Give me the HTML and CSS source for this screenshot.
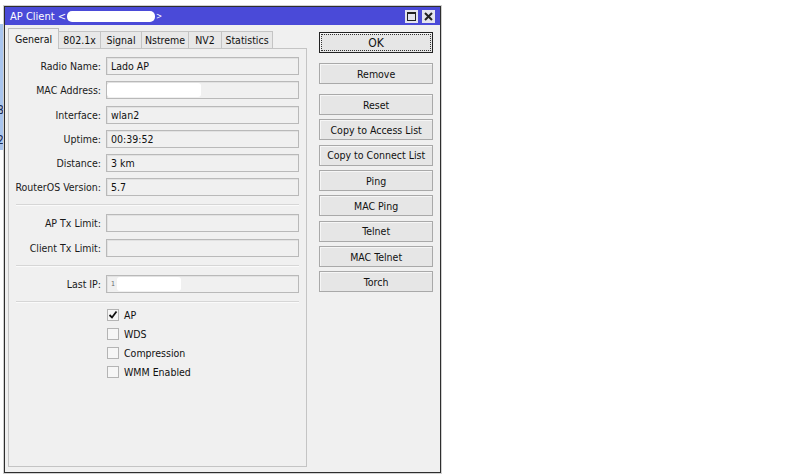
FILE: index.html
```html
<!DOCTYPE html>
<html>
<head>
<meta charset="utf-8">
<title>AP Client</title>
<link rel="stylesheet" href="styles.css">
</head>
<body>
<div class="desktop">
  <div class="behind">
    <span class="behind-char c8">8</span>
    <span class="behind-char c2">2</span>
  </div>
  <div class="window">
    <div class="titlebar">
      <span class="title">AP Client &lt;</span>
      <span class="title-redact"></span>
      <span class="title title-end">&gt;</span>
      <div class="tb-buttons">
        <span class="tb-btn">
          <svg width="13" height="13" viewBox="0 0 13 13"><rect x="2.5" y="2.5" width="8" height="8" fill="none" stroke="#222" stroke-width="1"/><rect x="2" y="2" width="9" height="2" fill="#222"/></svg>
        </span>
        <span class="tb-btn">
          <svg width="13" height="13" viewBox="0 0 13 13"><path d="M3 3 L10 10 M10 3 L3 10" stroke="#222" stroke-width="2"/></svg>
        </span>
      </div>
    </div>
    <div class="content">
      <div class="left">
        <div class="tabs">
          <span class="tab active">General</span>
          <span class="tab">802.1x</span>
          <span class="tab">Signal</span>
          <span class="tab">Nstreme</span>
          <span class="tab">NV2</span>
          <span class="tab">Statistics</span>
        </div>
        <div class="panel">
          <div class="group">
            <div class="row"><span class="label">Radio Name:</span><span class="field">Lado AP</span></div>
            <div class="row"><span class="label">MAC Address:</span><span class="field"><span class="blob mac-blob"></span></span></div>
            <div class="row"><span class="label">Interface:</span><span class="field">wlan2</span></div>
            <div class="row"><span class="label">Uptime:</span><span class="field">00:39:52</span></div>
            <div class="row"><span class="label">Distance:</span><span class="field">3 km</span></div>
            <div class="row"><span class="label">RouterOS Version:</span><span class="field">5.7</span></div>
          </div>
          <div class="sep"></div>
          <div class="group">
            <div class="row"><span class="label">AP Tx Limit:</span><span class="field"></span></div>
            <div class="row"><span class="label">Client Tx Limit:</span><span class="field"></span></div>
          </div>
          <div class="sep"></div>
          <div class="group">
            <div class="row"><span class="label">Last IP:</span><span class="field"><span class="ip-tick">1</span><span class="blob ip-blob"></span></span></div>
          </div>
          <div class="sep sep-last"></div>
          <div class="checks">
            <div class="check"><span class="box"><svg width="10" height="10" viewBox="0 0 10 10"><path d="M1.5 5 L4 7.5 L8.5 1.5" fill="none" stroke="#111" stroke-width="1.8"/></svg></span><span>AP</span></div>
            <div class="check"><span class="box"></span><span>WDS</span></div>
            <div class="check"><span class="box"></span><span>Compression</span></div>
            <div class="check"><span class="box"></span><span>WMM Enabled</span></div>
          </div>
        </div>
      </div>
      <div class="buttons">
        <span class="btn ok"><span class="focus">OK</span></span>
        <span class="btn big-gap">Remove</span>
        <span class="btn big-gap">Reset</span>
        <span class="btn">Copy to Access List</span>
        <span class="btn">Copy to Connect List</span>
        <span class="btn">Ping</span>
        <span class="btn">MAC Ping</span>
        <span class="btn">Telnet</span>
        <span class="btn">MAC Telnet</span>
        <span class="btn">Torch</span>
      </div>
    </div>
  </div>
</div>
</body>
</html>
```
FILE: styles.css
```css
* { box-sizing: border-box; }
html, body {
  margin: 0;
  padding: 0;
  background: #ffffff;
}
body {
  font-family: "DejaVu Sans Condensed", "DejaVu Sans", "Liberation Sans", sans-serif;
  font-size: 10.5px;
  color: #000;
}
.desktop {
  position: relative;
  width: 800px;
  height: 474px;
  overflow: hidden;
  background: #ffffff;
}
.behind {
  position: absolute;
  left: 0;
  top: 24px;
  width: 5px;
  height: 126px;
  background: #a9c5ee;
  overflow: hidden;
}
.behind-char {
  position: absolute;
  left: -3px;
  font-size: 12px;
  color: #1a2a50;
}
.c8 { top: 79px; }
.c2 { top: 109px; }

.window {
  position: absolute;
  left: 4px;
  top: 6px;
  width: 437px;
  height: 467px;
  border: 1px solid #2e2e2e;
  background: #f0f0f0;
  display: flex;
  flex-direction: column;
  box-shadow: 0 0 0 1px #d0d0d0;
}
.titlebar {
  height: 18px;
  background: #4a4ad8;
  display: flex;
  align-items: center;
  padding-left: 5px;
  color: #fff;
  font-size: 11px;
}
.title { white-space: pre; }
.title-redact {
  width: 88px;
  height: 11px;
  background: #fff;
  border-radius: 5px;
  margin-left: 1px;
}
.title-end { font-size: 8px; margin-left: 1px; }
.tb-buttons {
  margin-left: auto;
  display: flex;
  gap: 4px;
  margin-right: 5px;
}
.tb-btn {
  width: 13px;
  height: 13px;
  background: #e4e4ee;
  display: flex;
}

.content {
  flex: 1;
  display: flex;
  padding: 3px 7px 5px 3px;
  gap: 12px;
}
.left {
  width: 300px;
  display: flex;
  flex-direction: column;
}
.tabs {
  display: flex;
  align-items: flex-end;
  height: 20px;
  padding-left: 1px;
  position: relative;
  z-index: 1;
}
.tab {
  height: 17px;
  padding: 0 3px;
  display: flex;
  align-items: center;
  justify-content: center;
  background: #e8e8e8;
  border: 1px solid #c4c4c4;
  border-bottom: none;
  margin-left: -1px;
  color: #111;
}
.tab:nth-child(2) { width: 43px; }
.tab:nth-child(3) { width: 42px; }
.tab:nth-child(4) { width: 48px; }
.tab:nth-child(5) { width: 34px; }
.tab:nth-child(6) { width: 52px; }
.tab.active {
  height: 21px;
  width: 51px;
  background: #f0f0f0;
  margin-bottom: -1px;
  border-color: #bdbdbd;
}
.panel {
  flex: 1;
  border: 1px solid #c4c4c4;
  padding: 8px 7px 0 0;
  display: flex;
  flex-direction: column;
}
.group {
  display: flex;
  flex-direction: column;
  gap: 6.3px;
}
.row {
  display: flex;
  align-items: center;
  height: 18px;
}
.label {
  width: 93px;
  text-align: right;
  padding-right: 1px;
  color: #1a1a1a;
}
.field {
  margin-left: 4px;
  flex: 1;
  height: 18px;
  border: 1px solid #b9b9b9;
  background: #f0f0f0;
  padding-left: 4px;
  display: flex;
  align-items: center;
  color: #111;
  box-shadow: inset 1px 1px 0 #e2e2e2;
}
.blob {
  background: #fff;
  border-radius: 3px;
}
.mac-blob {
  width: 94px;
  height: 14px;
  margin-left: -4px;
}
.ip-tick {
  font-size: 7px;
  color: #666;
  margin-right: 2px;
}
.ip-blob {
  width: 64px;
  height: 14px;
}
.sep {
  margin: 8px 0 8px 7px;
  height: 2px;
  border-top: 1px solid #d6d6d6;
  border-bottom: 1px solid #fafafa;
}
.sep-last { margin-bottom: 6px; }
.checks {
  display: flex;
  flex-direction: column;
  gap: 7px;
  padding-left: 98px;
}
.check {
  display: flex;
  align-items: center;
  height: 12px;
  gap: 5px;
  color: #111;
}
.box {
  width: 12px;
  height: 12px;
  border: 1px solid #b4b4b4;
  background: #f6f6f6;
  display: flex;
  align-items: center;
  justify-content: center;
}

.buttons {
  width: 114px;
  display: flex;
  flex-direction: column;
  padding-top: 4px;
}
.btn {
  height: 21px;
  border: 1px solid #a9a9a9;
  background: #e6e6e6;
  display: flex;
  align-items: center;
  justify-content: center;
  margin-top: 4.35px;
  color: #111;
  box-shadow: inset 1px 1px 0 #f6f6f6;
}
.btn.ok {
  margin-top: 0;
  border: 1px solid #222;
  padding: 1px;
}
.btn.big-gap { margin-top: 10px; }
.focus {
  width: 100%;
  height: 100%;
  border: 1px dotted #333;
  display: flex;
  align-items: center;
  justify-content: center;
  font-size: 12px;
}
```
